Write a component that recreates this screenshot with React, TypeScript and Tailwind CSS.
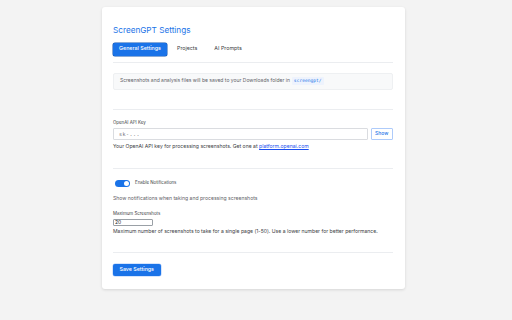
import { useState } from "react";

const tabs = ["General Settings", "Projects", "AI Prompts"];

function Divider({ className = "" }: { className?: string }) {
  return <div className={`h-px bg-[#ebedf0] ${className}`} />;
}

export default function App() {
  const [active, setActive] = useState(0);
  const [notify, setNotify] = useState(true);
  const [apiKey, setApiKey] = useState("");
  const [maxShots, setMaxShots] = useState("20");

  return (
    <div className="min-h-screen bg-[#f3f3f3] pt-[7px] pl-[102px] font-['Inter',sans-serif] text-[#202124]">
      <div className="w-[303px] rounded-[3px] bg-white px-[11px] pr-[12px] pt-[17px] pb-[12px] shadow-[0_1px_3px_rgba(0,0,0,0.12)]">
        <h1 className="text-[8.2px] leading-[12px] font-normal text-[#1a73e8]">
          ScreenGPT Settings
        </h1>

        <div className="mt-[7px] flex items-center gap-[3px]">
          {tabs.map((t, i) => (
            <button
              key={t}
              onClick={() => setActive(i)}
              className={
                i === active
                  ? "h-[12.5px] w-[54px] rounded-[2px] bg-[#1a73e8] text-[5.3px] font-medium text-white shadow-[0_0_0_0.5px_#1557b0]"
                  : "h-[12.5px] px-[7px] text-[5.3px] text-[#3c4043]"
              }
            >
              {t}
            </button>
          ))}
        </div>

        <Divider className="mt-[6px]" />

        <div className="mt-[10px] flex h-[17px] items-center rounded-[2px] border border-[#eef0f2] bg-[#f8f9fa] px-[6px] text-[5px] text-[#5f6368]">
          Screenshots and analysis files will be saved to your Downloads folder in
          <code className="ml-[2px] rounded-[1px] bg-[#eef3fd] px-[2px] py-[0.5px] font-['DejaVu_Sans_Mono',monospace] text-[4.6px] text-[#1a73e8]">
            screengpt/
          </code>
        </div>

        <Divider className="mt-[19px]" />

        <label className="mt-[10px] block text-[4.4px] leading-[6px] text-[#3c4043]">
          OpenAI API Key
        </label>
        <div className="mt-[2px] flex gap-[3px]">
          <input
            type="password"
            value={apiKey}
            onChange={(e) => setApiKey(e.target.value)}
            placeholder="sk-..."
            className="h-[12.6px] w-[255px] rounded-[1px] border border-[#dadce0] px-[5px] font-['DejaVu_Sans_Mono',monospace] text-[5px] tracking-[0.5px] outline-none placeholder:text-[#5f6368]"
          />
          <button className="h-[12.6px] w-[21.5px] rounded-[1px] border border-[#aecbfa] bg-white text-[5px] font-medium text-[#1a73e8]">
            Show
          </button>
        </div>
        <p className="mt-[2.5px] text-[5.1px] leading-[6px] text-[#3c4043]">
          Your OpenAI API key for processing screenshots. Get one at{" "}
          <a href="#" className="underline text-[#1a4ff0]">
            platform.openai.com
          </a>
        </p>

        <Divider className="mt-[19px]" />

        <div className="mt-[11px] flex items-center gap-[5px] pl-[2px]">
          <button
            onClick={() => setNotify(!notify)}
            className={`flex h-[7px] w-[15px] items-center rounded-full px-[1px] ${
              notify ? "justify-end bg-[#1a73e8]" : "justify-start bg-[#bdc1c6]"
            }`}
          >
            <span className="h-[5px] w-[5px] rounded-full bg-white" />
          </button>
          <span className="text-[4.4px] text-[#3c4043]">Enable Notifications</span>
        </div>
        <p className="mt-[8px] text-[5.1px] leading-[6px] text-[#5f6368]">
          Show notifications when taking and processing screenshots
        </p>

        <label className="mt-[10px] block text-[4.4px] leading-[6px] text-[#3c4043]">
          Maximum Screenshots
        </label>
        <input
          type="text"
          value={maxShots}
          onChange={(e) => setMaxShots(e.target.value)}
          className="mt-[2px] block h-[7.5px] w-[40px] rounded-[1px] border border-[#9aa0a6] px-[1px] text-[5px] outline-none"
        />
        <p className="mt-[2px] text-[5.1px] leading-[6px] text-[#3c4043]">
          Maximum number of screenshots to take for a single page (1-50). Use a
          lower number for better performance.
        </p>

        <Divider className="mt-[18px]" />

        <button className="mt-[10px] h-[12.7px] w-[47.5px] rounded-[2px] bg-[#1a73e8] text-[5.3px] font-medium text-white shadow-[0_0_0_0.5px_#aecbfa]">
          Save Settings
        </button>
      </div>
    </div>
  );
}
